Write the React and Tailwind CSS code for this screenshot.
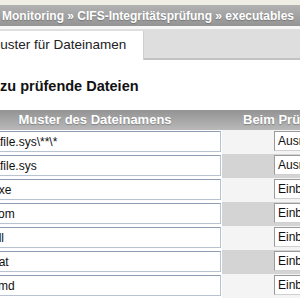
import React from "react";

const rows = [
  { pattern: "*\\*\\file.sys\\**\\*", mode: "Ausnehmen" },
  { pattern: "*\\*\\file.sys", mode: "Ausnehmen" },
  { pattern: "*.exe", mode: "Einbeziehen" },
  { pattern: "*.com", mode: "Einbeziehen" },
  { pattern: "*.dll", mode: "Einbeziehen" },
  { pattern: "*.bat", mode: "Einbeziehen" },
  { pattern: "*.cmd", mode: "Einbeziehen" },
];

export default function App() {
  return (
    <div className="w-[300px] h-[300px] overflow-hidden bg-white font-['Liberation_Sans',Arial,sans-serif]">
      <div className="h-[5px] bg-[#eeeee4]" />
      <div className="h-[21px] bg-gradient-to-b from-[#b2b2b2] to-[#949494] flex items-center whitespace-nowrap text-white font-bold text-[12px] [text-shadow:0_1px_1px_rgba(0,0,0,0.25)]">
        <span className="ml-[2px]">Monitoring » CIFS-Integritätsprüfung » executables</span>
      </div>
      <div className="h-[3px] bg-[#f7f7f7]" />
      <div className="h-[31px] bg-[#dedede] border-b-2 border-[#c2c2c2] flex items-end">
        <div className="h-[29px] w-[144px] -mb-[2px] bg-white border-r border-[#cfcfcf] flex items-center overflow-hidden whitespace-nowrap">
          <span className="ml-[-11px] text-[13.5px] text-[#222]">Muster für Dateinamen</span>
        </div>
      </div>
      <h2 className="mt-[17px] h-[18px] leading-[18px] text-[14.5px] font-bold text-[#111] whitespace-nowrap">
        zu prüfende Dateien
      </h2>
      <div className="mt-[15px] ml-[-32px] w-[420px]">
        <table className="border-collapse w-full">
          <thead>
            <tr className="h-[20px] bg-gradient-to-b from-[#939393] to-[#b9b9b9] text-white font-bold text-[13px] [text-shadow:0_1px_1px_rgba(0,0,0,0.25)]">
              <th className="w-[254px] p-0 text-center font-bold">Muster des Dateinamens</th>
              <th className="p-0 pl-[21px] text-left font-bold whitespace-nowrap">Beim Prüfen</th>
            </tr>
          </thead>
          <tbody>
            {rows.map((r, i) => (
              <tr key={i} className="h-[24px]">
                <td className="p-0 pt-[1px] pb-[2px] align-top bg-white">
                  <div className="h-[21px] w-[253px] bg-white border border-[#b7c3d1] border-t-[#8e9eb5] flex items-center pl-[15px] overflow-hidden whitespace-nowrap text-[12px] text-[#111]">
                    {r.pattern}
                  </div>
                </td>
                <td className={"p-0 pt-[1px] align-top " + (i % 2 === 1 ? "bg-[#d4d4d4]" : "bg-[#f4f4f4]")}>
                  <div className="ml-[52px] h-[20px] w-[100px] bg-white border border-[#9a9a9a] border-r-[#d0d0d0] border-b-[#d0d0d0] flex items-center pl-[3px] text-[12px] text-[#111] whitespace-nowrap">
                    {r.mode}
                  </div>
                </td>
              </tr>
            ))}
          </tbody>
        </table>
      </div>
    </div>
  );
}
